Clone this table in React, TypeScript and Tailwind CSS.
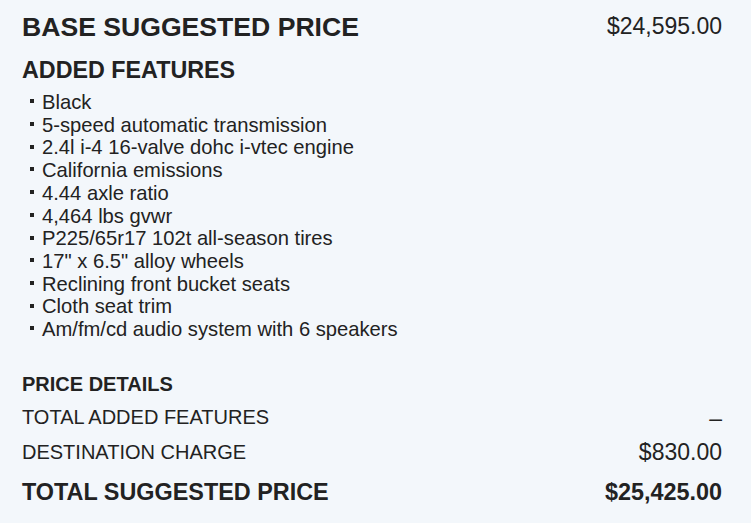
const features = [
  "Black",
  "5-speed automatic transmission",
  "2.4l i-4 16-valve dohc i-vtec engine",
  "California emissions",
  "4.44 axle ratio",
  "4,464 lbs gvwr",
  "P225/65r17 102t all-season tires",
  '17" x 6.5" alloy wheels',
  "Reclining front bucket seats",
  "Cloth seat trim",
  "Am/fm/cd audio system with 6 speakers",
];

export default function App() {
  return (
    <div className="min-h-screen bg-[#f3f7fb] text-[#222222] font-['Liberation_Sans',Arial,sans-serif] pl-[22px] pr-[29px] pt-[12px]">
      {/* Base price */}
      <div className="flex items-center justify-between">
        <h1 className="text-[26.6px] font-bold leading-[30px]">BASE SUGGESTED PRICE</h1>
        <div className="text-[23px] leading-[30px] -translate-y-[1px]">$24,595.00</div>
      </div>

      {/* Features */}
      <h2 className="mt-[15px] text-[23.3px] font-bold leading-[26px]">ADDED FEATURES</h2>
      <ul className="mt-[8px] text-[20.2px] leading-[22.7px]">
        {features.map((f, i) => (
          <li key={i} className="flex items-center">
            <span className="ml-[8px] mr-[8px] h-[4px] w-[4px] -translate-y-[1px] bg-[#222222]"></span>
            {f}
          </li>
        ))}
      </ul>

      {/* Price details */}
      <h3 className="mt-[31px] text-[20px] font-bold leading-[24px]">PRICE DETAILS</h3>
      <div className="mt-[9px] flex items-center justify-between text-[20px] leading-[24px]">
        <span>TOTAL ADDED FEATURES</span>
        <span className="text-[23px] translate-y-[1px]">–</span>
      </div>
      <div className="mt-[11px] flex items-center justify-between text-[20px] leading-[24px]">
        <span>DESTINATION CHARGE</span>
        <span className="text-[23px]">$830.00</span>
      </div>
      <div className="mt-[14px] flex items-center justify-between text-[23.4px] font-bold leading-[28px]">
        <span>TOTAL SUGGESTED PRICE</span>
        <span>$25,425.00</span>
      </div>
    </div>
  );
}
